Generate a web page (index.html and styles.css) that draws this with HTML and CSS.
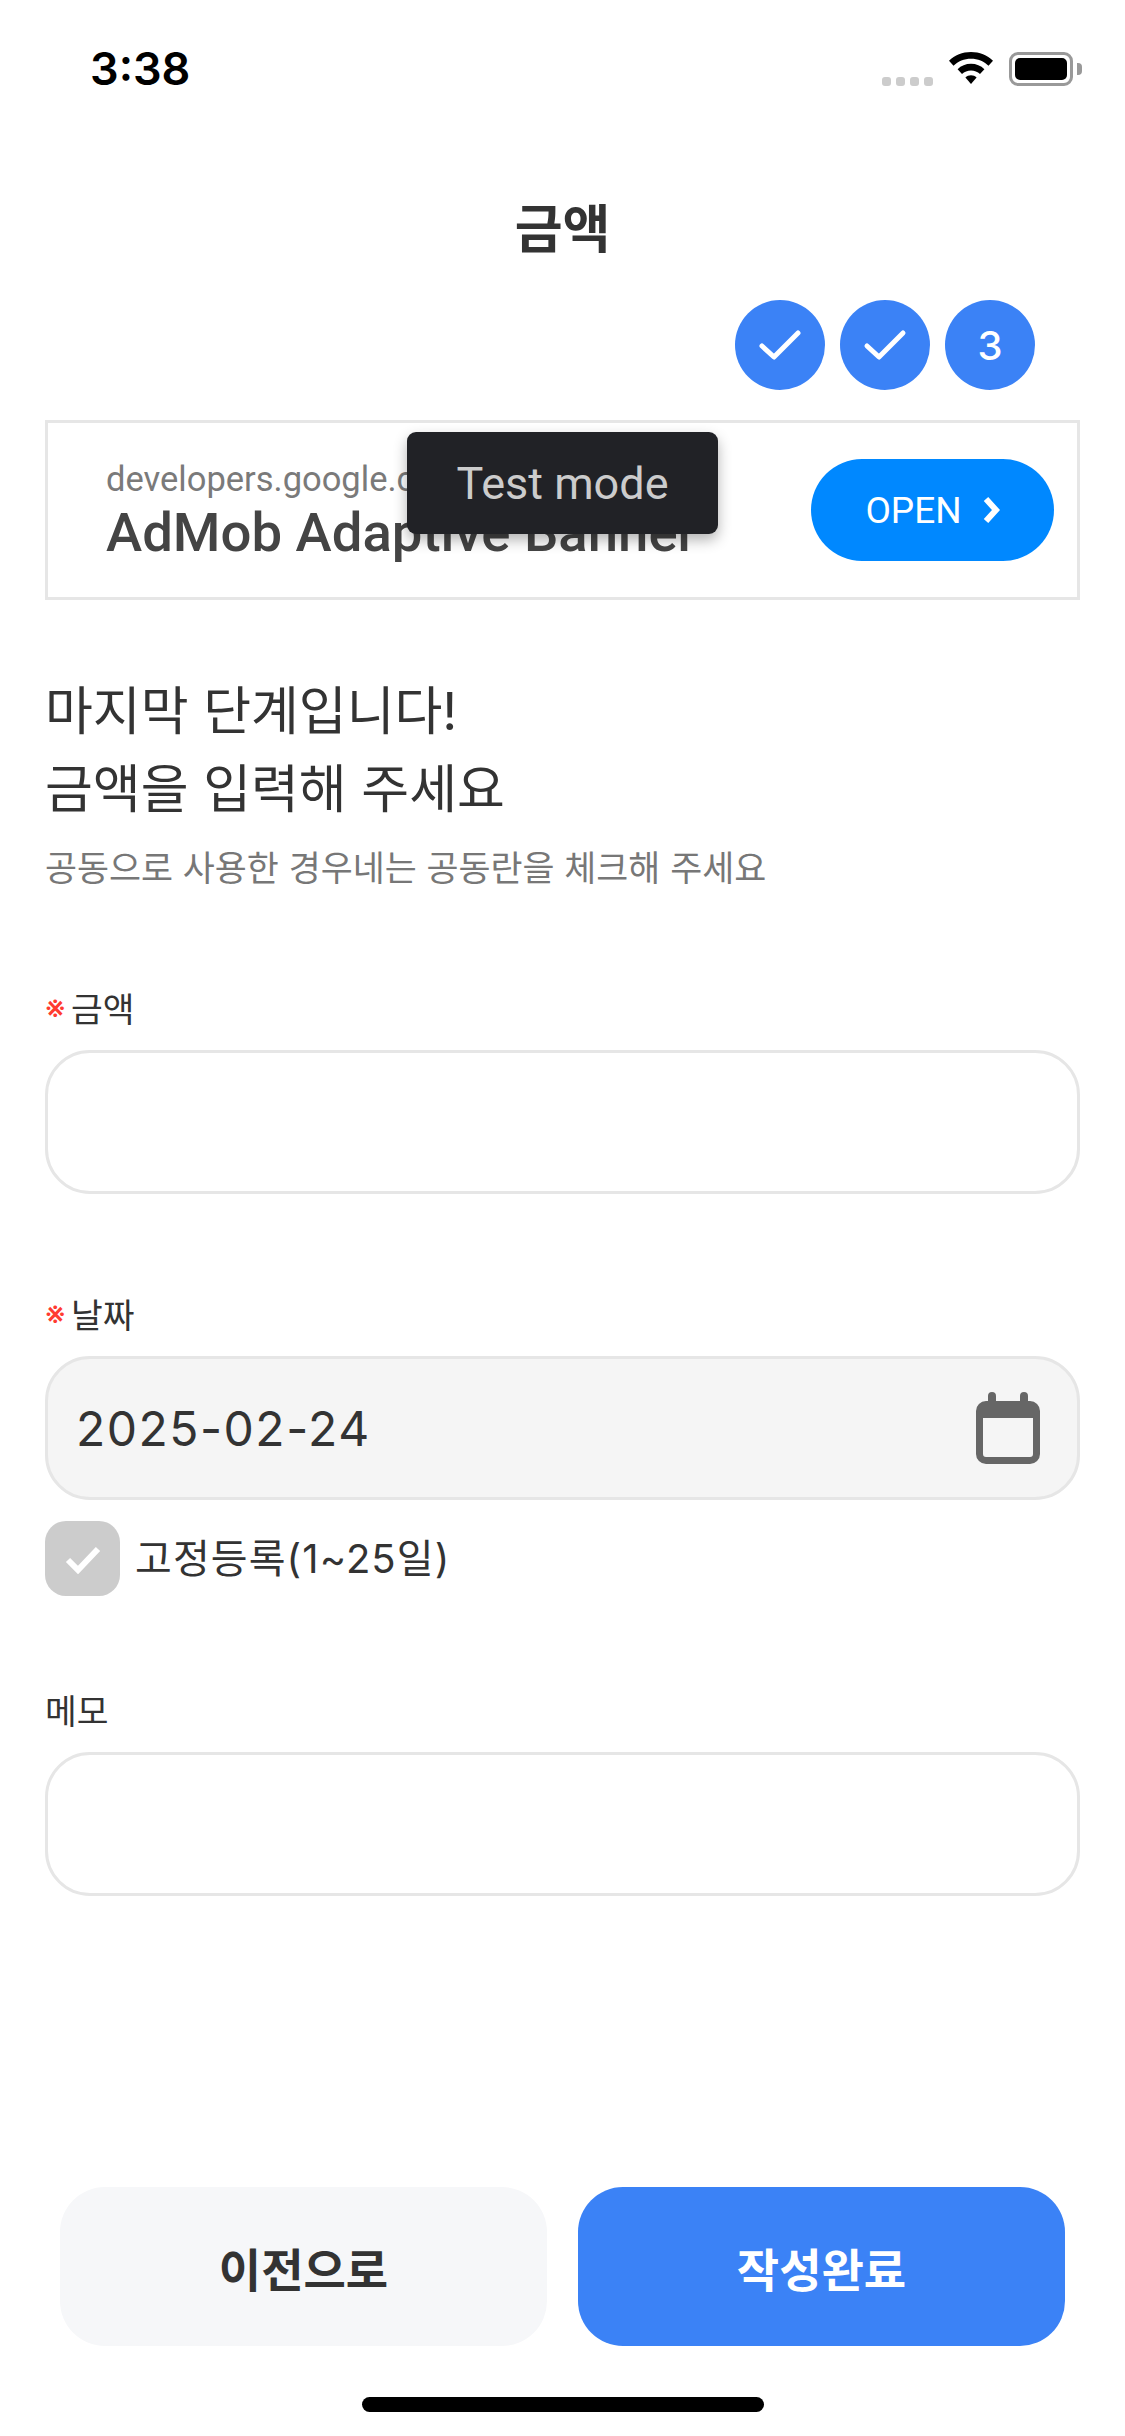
FILE: index.html
```html
<!DOCTYPE html>
<html lang="ko">
<head>
<meta charset="utf-8">
<title>금액</title>
<link rel="stylesheet" href="styles.css">
</head>
<body>
<div class="screen">
  <header class="status">
    <span class="time">3:38</span>
    <div class="status-icons">
      <div class="signal"><i></i><i></i><i></i><i></i></div>
      <svg class="wifi" width="46" height="34" viewBox="0 0 46 34"><path d="M23 0C14.500 0 6.700 3.300 1 8.800L5.500 13.800C10.100 9.400 16.200 6.800 23 6.800S35.900 9.400 40.500 13.800L45 8.800C39.300 3.300 31.500 0 23 0Z"/><path d="M23 11.800C17.800 11.800 13.100 13.800 9.600 17.200L14 22C16.400 19.800 19.500 18.400 23 18.400S29.600 19.800 32 22L36.400 17.200C32.900 13.800 28.200 11.800 23 11.800Z"/><path d="M23 23.200C20.800 23.200 18.900 24 17.400 25.400L23 32L28.600 25.400C27.100 24 25.200 23.200 23 23.200Z"/></svg>
      <div class="battery"><div class="battery-body"><div class="battery-fill"></div></div><div class="battery-cap"></div></div>
    </div>
  </header>

  <h1 class="title">금액</h1>

  <div class="steps">
    <div class="step"><svg width="44" height="34" viewBox="0 0 44 34"><path d="M4 18L16 29L40 5" fill="none" stroke="#fff" stroke-width="5" stroke-linecap="round" stroke-linejoin="round"/></svg></div>
    <div class="step"><svg width="44" height="34" viewBox="0 0 44 34"><path d="M4 18L16 29L40 5" fill="none" stroke="#fff" stroke-width="5" stroke-linecap="round" stroke-linejoin="round"/></svg></div>
    <div class="step">3</div>
  </div>

  <main class="content">
    <section class="ad">
      <div class="ad-text">
        <div class="ad-url">developers.google.com</div>
        <div class="ad-headline">AdMob Adaptive Banner</div>
      </div>
      <div class="ad-open">OPEN<svg width="18" height="28" viewBox="0 0 18 28"><path d="M4 3L14 14L4 25" fill="none" stroke="#fff" stroke-width="6"/></svg></div>
      <div class="ad-test">Test mode</div>
    </section>

    <section class="intro">
      <h2 class="heading">마지막 단계입니다!<br>금액을 입력해 주세요</h2>
      <p class="sub">공동으로 사용한 경우네는 공동란을 체크해 주세요</p>
    </section>

    <div class="field field-amount">
      <div class="label"><span class="req">※</span>금액</div>
      <div class="input"></div>
    </div>

    <div class="field field-date">
      <div class="label"><span class="req">※</span>날짜</div>
      <div class="input input-date">
        <span class="date-value">2025-02-24</span>
        <svg width="64" height="72" viewBox="0 0 64 72"><path fill="#666" fill-rule="evenodd" d="M16 0a4 4 0 0 1 4 4V9H44V4a4 4 0 0 1 8 0V9H54A10 10 0 0 1 64 19V62A10 10 0 0 1 54 72H10A10 10 0 0 1 0 62V19A10 10 0 0 1 10 9H12V4A4 4 0 0 1 16 0ZM7 26V62A3 3 0 0 0 10 65H54A3 3 0 0 0 57 62V26Z"/></svg>
      </div>
      <div class="fixed">
        <div class="checkbox"><svg width="38" height="30" viewBox="0 0 38 30"><path d="M4 16L14 26L34 5" fill="none" stroke="#fff" stroke-width="6"/></svg></div>
        <span class="fixed-label">고정등록(1~25일)</span>
      </div>
    </div>

    <div class="field field-memo">
      <div class="label">메모</div>
      <div class="input"></div>
    </div>
  </main>

  <footer class="actions">
    <div class="btn btn-prev">이전으로</div>
    <div class="btn btn-done">작성완료</div>
  </footer>
  <div class="home-wrap"><div class="home"></div></div>
</div>
</body>
</html>
```

FILE: styles.css
```css
* { box-sizing: border-box; margin: 0; padding: 0; }
html, body { background: #fff; }
body { font-family: "Inter", "Noto Sans CJK KR", sans-serif; color: #333; }
.screen { width: 1125px; height: 2436px; display: flex; flex-direction: column; overflow: hidden; }

.status { height: 196px; padding: 45px 43px 0 90px; display: flex; justify-content: space-between; align-items: flex-start; }
.time { font-size: 45px; line-height: 48px; font-weight: 600; color: #000; font-family: "Inter", sans-serif; }
.status-icons { display: flex; align-items: flex-end; height: 34px; margin-top: 7px; }
.signal { display: flex; gap: 5px; margin-right: 15px; }
.signal i { width: 9px; height: 9px; border-radius: 3px; background: #ccc; display: block; }
.wifi { margin-right: 15px; }
.battery { display: flex; align-items: center; }
.battery-body { width: 64px; height: 34px; border: 3px solid #999; border-radius: 9px; padding: 3px; }
.battery-fill { width: 100%; height: 100%; background: #000; border-radius: 5px; }
.battery-cap { width: 5px; height: 12px; background: #999; border-radius: 0 4px 4px 0; margin-left: 4px; }

.title { text-align: center; font-size: 52px; line-height: 68px; font-weight: 700; color: #333; }

.steps { display: flex; justify-content: flex-end; gap: 15px; padding: 0 90px 0 0; margin-top: 36px; }
.step { width: 90px; height: 90px; border-radius: 50%; background: #3b82f6; color: #fff; display: flex; align-items: center; justify-content: center; font-size: 40px; font-weight: 500; }

.content { padding: 30px 45px 0; }

.ad { position: relative; height: 180px; border: 3px solid #e6e6e6; display: flex; align-items: center; justify-content: space-between; padding: 0 23px 0 58px; }
.ad-url { font-size: 34.500px; line-height: 44px; color: #7a7a7a; font-family: "Roboto", sans-serif; white-space: nowrap; }
.ad-headline { font-size: 54.500px; line-height: 62px; font-weight: 500; color: #444; font-family: "Roboto", sans-serif; white-space: nowrap; }
.ad-open { width: 243px; height: 102px; border-radius: 51px; background: #0088ff; color: #fff; font-size: 37px; font-weight: 400; font-family: "Roboto", sans-serif; display: flex; align-items: center; justify-content: center; gap: 20px; }
.ad-test { position: absolute; left: 359px; top: 9px; width: 311px; height: 102px; background: #212226; border-radius: 9px; color: #ccc; font-size: 45px; font-family: "Roboto", sans-serif; display: flex; align-items: center; justify-content: center; box-shadow: 0 6px 14px rgba(0,0,0,.3); }

.intro { margin-top: 73px; }
.heading { font-size: 52px; line-height: 78px; font-weight: 400; color: #333; }
.sub { margin-top: 12px; font-size: 34.800px; line-height: 54px; color: #777; }

.field-amount { margin-top: 89px; }
.field-date { margin-top: 96px; }
.field-memo { margin-top: 90px; }
.label { font-size: 34.500px; line-height: 52px; color: #333; display: flex; align-items: center; }
.req { color: #ff3b30; font-size: 32px; line-height: 1; width: 26px; margin-bottom: 4px; flex: none; white-space: nowrap; }
.input { margin-top: 14px; height: 144px; border: 3px solid #e6e6e6; border-radius: 45px; }
.input-date { background: #f5f5f5; display: flex; align-items: center; justify-content: space-between; padding: 0 37px 0 28px; }
.date-value { font-size: 48px; letter-spacing: 1.500px; color: #333; }
.fixed { margin-top: 21px; display: flex; align-items: center; gap: 15px; }
.checkbox { width: 75px; height: 75px; border-radius: 21px; background: #ccc; display: flex; align-items: center; justify-content: center; }
.fixed-label { font-size: 40px; letter-spacing: 1.100px; color: #333; margin-bottom: 5px; }

.actions { margin-top: auto; padding: 0 60px; display: flex; gap: 31px; }
.btn { flex: 1; height: 159px; border-radius: 45px; display: flex; align-items: center; justify-content: center; font-size: 46px; font-weight: 700; }
.btn-prev { background: #f6f7f9; color: #333; }
.btn-done { background: #3b82f6; color: #fff; }
.home-wrap { height: 90px; display: flex; justify-content: center; padding-top: 51px; }
.home { width: 402px; height: 15px; border-radius: 8px; background: #000; }
```
